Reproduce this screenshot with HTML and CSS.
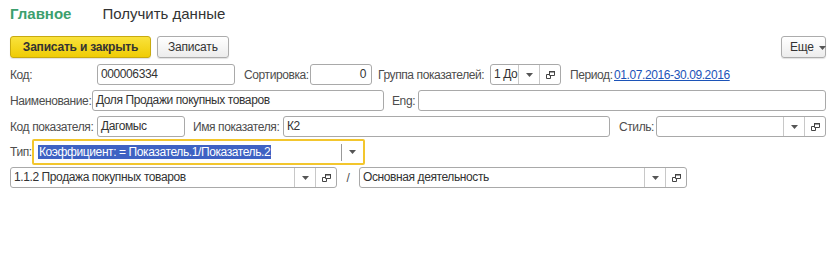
FILE: index.html
```html
<!DOCTYPE html>
<html lang="ru">
<head>
<meta charset="utf-8">
<link rel="stylesheet" href="styles.css">
</head>
<body>
<div class="page">
  <div class="tabs">
    <span class="tab tab-active">Главное</span>
    <span class="tab">Получить данные</span>
  </div>
  <div class="toolbar">
    <button class="btn btn-primary">Записать и закрыть</button>
    <button class="btn">Записать</button>
    <span class="spacer"></span>
    <button class="btn btn-more">Еще<svg class="arr" width="7" height="4" viewBox="0 0 7 4"><path d="M0 0h7L3.5 4z" fill="#555"/></svg></button>
  </div>

  <div class="row">
    <label class="lbl w87">Код:</label>
    <div class="inp w138">000006334</div>
    <label class="lbl ml9 w66">Сортировка:</label>
    <div class="inp w62 num">0</div>
    <label class="lbl ml6 w112">Группа показателей:</label>
    <div class="combo w71">
      <span class="ctext">1 До:</span>
      <span class="cbtn dd"><svg width="7" height="4" viewBox="0 0 7 4"><path d="M0 0h7L3.5 4z" fill="#555"/></svg></span>
      <span class="cbtn op"><svg width="11" height="10" viewBox="0 0 11 10"><path d="M4.5 1.5h5v4h-5z" fill="none" stroke="#444"/><path d="M4 1h6v1.5H4z" fill="#444"/><path d="M4.5 4.5h-3v4h4v-3" fill="none" stroke="#444"/></svg></span>
    </div>
    <label class="lbl ml9 w44">Период:</label>
    <a class="link" href="#">01.07.2016-30.09.2016</a>
  </div>

  <div class="row">
    <label class="lbl w82">Наименование:</label>
    <div class="inp w292">Доля Продажи покупных товаров</div>
    <label class="lbl ml8 w26">Eng:</label>
    <div class="inp w408"></div>
  </div>

  <div class="row">
    <label class="lbl w87">Код показателя:</label>
    <div class="inp w88">Дагомыс</div>
    <label class="lbl ml8 w90">Имя показателя:</label>
    <div class="inp w327">К2</div>
    <label class="lbl ml9 w37">Стиль:</label>
    <div class="combo w170">
      <span class="ctext"></span>
      <span class="cbtn dd"><svg width="7" height="4" viewBox="0 0 7 4"><path d="M0 0h7L3.5 4z" fill="#555"/></svg></span>
      <span class="cbtn op"><svg width="11" height="10" viewBox="0 0 11 10"><path d="M4.5 1.5h5v4h-5z" fill="none" stroke="#444"/><path d="M4 1h6v1.5H4z" fill="#444"/><path d="M4.5 4.5h-3v4h4v-3" fill="none" stroke="#444"/></svg></span>
    </div>
  </div>

  <div class="row row-type">
    <label class="lbl w22">Тип:</label>
    <div class="focus">
      <span class="ftext"><span class="sel">Коэффициент: = Показатель.1/Показатель.2</span></span>
      <span class="fsep"></span>
      <span class="fbtn"><svg width="7" height="4" viewBox="0 0 7 4"><path d="M0 0h7L3.5 4z" fill="#555"/></svg></span>
    </div>
  </div>

  <div class="row row-last">
    <div class="combo w327">
      <span class="ctext">1.1.2 Продажа покупных товаров</span>
      <span class="cbtn dd"><svg width="7" height="4" viewBox="0 0 7 4"><path d="M0 0h7L3.5 4z" fill="#555"/></svg></span>
      <span class="cbtn op"><svg width="11" height="10" viewBox="0 0 11 10"><path d="M4.5 1.5h5v4h-5z" fill="none" stroke="#444"/><path d="M4 1h6v1.5H4z" fill="#444"/><path d="M4.5 4.5h-3v4h4v-3" fill="none" stroke="#444"/></svg></span>
    </div>
    <span class="slash">/</span>
    <div class="combo w328">
      <span class="ctext">Основная деятельность</span>
      <span class="cbtn dd"><svg width="7" height="4" viewBox="0 0 7 4"><path d="M0 0h7L3.5 4z" fill="#555"/></svg></span>
      <span class="cbtn op"><svg width="11" height="10" viewBox="0 0 11 10"><path d="M4.5 1.5h5v4h-5z" fill="none" stroke="#444"/><path d="M4 1h6v1.5H4z" fill="#444"/><path d="M4.5 4.5h-3v4h4v-3" fill="none" stroke="#444"/></svg></span>
    </div>
  </div>
</div>
</body>
</html>
```
FILE: styles.css
```css
* { box-sizing: border-box; }
html, body { margin: 0; padding: 0; background: #fff; }
body {
  font-family: Arial, "Liberation Sans", sans-serif;
  font-size: 12px;
  letter-spacing: -0.4px;
  color: #4d4d4d;
}
.page { padding: 0 10px 0 10px; width: 837px; }

.tabs { display: flex; height: 30px; padding-top: 4px; letter-spacing: 0; }
.tab { font-size: 15px; line-height: 20px; color: #333; }
.tab-active { color: #3c9f6e; font-weight: bold; margin-right: 31px; }

.toolbar { display: flex; align-items: center; margin-top: 6px; height: 22px; }
.spacer { flex: 1; }
.btn {
  font-family: inherit;
  height: 22px;
  padding: 0 10px;
  border: 1px solid #acacac;
  border-radius: 3px;
  background: linear-gradient(#ffffff, #ececec);
  color: #333;
  font-size: 12px;
  letter-spacing: -0.2px;
  line-height: 20px;
  margin-right: 6px;
  white-space: nowrap;
  box-shadow: 0 1px 1px rgba(0,0,0,0.12);
}
.btn-primary {
  width: 141px;
  padding: 0;
  background: linear-gradient(#f9e23c, #efcc05);
  border-color: #c8aa10;
  font-weight: bold;
  color: #333;
}
.btn-more { width: 45px; padding: 0 0 0 8px; text-align: left; margin-right: 1px; }
.btn-more .arr { margin-left: 5px; vertical-align: middle; }

.row { display: flex; align-items: center; height: 21px; margin-top: 5px; }
.toolbar + .row { margin-top: 6px; }

.lbl { white-space: nowrap; flex: none; color: #4d4d4d; }
.inp, .combo {
  flex: none;
  height: 21px;
  border: 1px solid #a9a9a9;
  border-radius: 3px;
  background: #fff;
  color: #333;
  line-height: 19px;
  padding: 0 3px;
  white-space: nowrap;
  overflow: hidden;
}
.num { text-align: right; padding-right: 5px; }
.combo { display: flex; padding: 0; }
.ctext { flex: 1; padding: 0 3px; overflow: hidden; }
.cbtn { flex: none; display: flex; align-items: center; justify-content: center; border-left: 1px solid #c8c8c8; height: 19px; }
.cbtn.dd { width: 21px; }
.cbtn.op { width: 21px; }

.link { color: #1c53b8; text-decoration: underline; white-space: nowrap; }

.ml6 { margin-left: 6px; }
.ml8 { margin-left: 8px; }
.ml9 { margin-left: 9px; }
.ml10 { margin-left: 10px; }
.w22 { width: 22px; }
.w26 { width: 26px; }
.w37 { width: 37px; }
.w44 { width: 44px; }
.w62 { width: 62px; }
.w66 { width: 66px; }
.w71 { width: 71px; }
.w82 { width: 82px; }
.w87 { width: 87px; }
.w88 { width: 88px; }
.w90 { width: 90px; }
.w112 { width: 112px; }
.w138 { width: 138px; }
.w170 { width: 170px; }
.w292 { width: 292px; }
.w327 { width: 327px; }
.w328 { width: 328px; }
.w408 { width: 408px; }

.row-type { height: 26px; margin-top: 2px; }
.focus {
  display: flex;
  align-items: center;
  width: 333px;
  height: 26px;
  border: 2px solid #f3c62d;
  border-radius: 2px;
  background: #fff;
}
.ftext { flex: 1; padding-left: 4px; color: #fff; white-space: nowrap; }
.sel { background: #3e62c3; color: #fff; line-height: 14px; display: inline-block; padding: 0 1px; }
.fsep { width: 1px; height: 17px; background: #9a9a9a; }
.fbtn { width: 21px; display: flex; justify-content: center; }

.row-last { margin-top: 2px; }
.slash { width: 22px; text-align: center; color: #4d4d4d; }
```
